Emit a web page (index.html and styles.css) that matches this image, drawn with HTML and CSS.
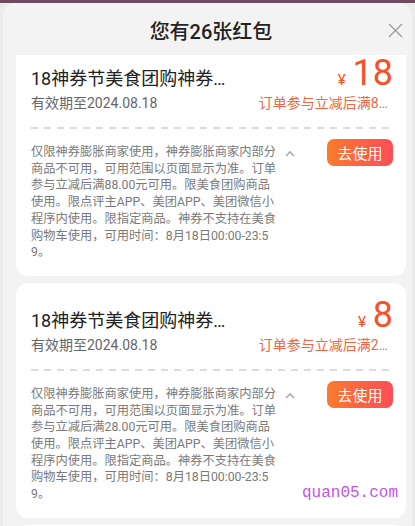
FILE: index.html
```html
<!DOCTYPE html>
<html lang="zh-CN">

<head>
    <meta charset="utf-8">
    <link rel="stylesheet" href="styles.css">
</head>

<body>

    <div class="sheet">
        <div class="sheet-head">
            <span></span>
            <h1 class="sheet-title">您有26张红包</h1>
            <button class="close" aria-label="关闭">
                <svg width="15" height="15" viewBox="0 0 15 15">
                    <path d="M1 1 L14 14 M14 1 L1 14" stroke="#9a9a9a" stroke-width="1.3" fill="none" />
                </svg>
            </button>
        </div>

        <div class="list">
            <div class="list-inner">

                <div class="coupon">
                    <div class="coupon-top">
                        <div class="coupon-name">18神券节美食团购神券…</div>
                        <div class="price"><span class="yen">¥</span>18</div>
                    </div>
                    <div class="coupon-sub">
                        <span class="expire">有效期至2024.08.18</span>
                        <span class="rule">订单参与立减后满8…</span>
                    </div>
                    <div class="dash"></div>
                    <div class="coupon-body">
                        <p class="desc">仅限神券膨胀商家使用，神券膨胀商家内部分商品不可用，可用范围以页面显示为准。订单参与立减后满88.00元可用。限美食团购商品使用。限点评主APP、美团APP、美团微信小程序内使用。限指定商品。神券不支持在美食购物车使用，可用时间：8月18日00:00-23:59。</p>
                        <svg class="fold" width="10" height="7" viewBox="0 0 10 7">
                            <polyline points="1,6 5,2 9,6" stroke="#aaa" stroke-width="1.6" fill="none" />
                        </svg>
                        <button class="use-btn">去使用</button>
                    </div>
                </div>

                <div class="coupon">
                    <div class="coupon-top">
                        <div class="coupon-name">18神券节美食团购神券…</div>
                        <div class="price"><span class="yen">¥</span>8</div>
                    </div>
                    <div class="coupon-sub">
                        <span class="expire">有效期至2024.08.18</span>
                        <span class="rule">订单参与立减后满2…</span>
                    </div>
                    <div class="dash"></div>
                    <div class="coupon-body">
                        <p class="desc">仅限神券膨胀商家使用，神券膨胀商家内部分商品不可用，可用范围以页面显示为准。订单参与立减后满28.00元可用。限美食团购商品使用。限点评主APP、美团APP、美团微信小程序内使用。限指定商品。神券不支持在美食购物车使用，可用时间：8月18日00:00-23:59。</p>
                        <svg class="fold" width="10" height="7" viewBox="0 0 10 7">
                            <polyline points="1,6 5,2 9,6" stroke="#aaa" stroke-width="1.6" fill="none" />
                        </svg>
                        <button class="use-btn">去使用</button>
                    </div>
                </div>

                <div class="coupon"></div>

            </div>
        </div>

        <div class="watermark">quan05.com</div>
    </div>

</body>

</html>
```

FILE: styles.css
```css
html,
body {
    margin: 0;
    width: 415px;
    height: 526px;
    overflow: hidden;
}

body {
    background: linear-gradient(#6e4c60 0, #6e4c60 3px, #ebebeb 3px);
    font-family: Roboto, "Noto Sans CJK SC", sans-serif;
    color: #222;
}

.sheet {
    position: relative;
    margin: 3px 3px 0;
    height: 523px;
    background: #f3f3f3;
    border-radius: 12px 12px 0 0;
    display: flex;
    flex-direction: column;
    overflow: hidden;
}

.sheet-head {
    height: 52px;
    flex-shrink: 0;
    display: grid;
    grid-template-columns: 1fr auto 1fr;
    align-items: center;
    padding: 0 9px 0 16px;
}

.sheet-title {
    margin: 5px 0 0;
    font-size: 20px;
    font-weight: 500;
    line-height: 28px;
}

.close {
    justify-self: end;
    padding: 0;
    border: none;
    background: none;
    display: flex;
    margin-top: 2px;
}

.list {
    flex: 1;
    overflow: hidden;
    padding: 0 6px 0 13px;
}

.list-inner {
    margin-top: -14px;
    display: flex;
    flex-direction: column;
    gap: 7px;
}

.coupon {
    background: #fff;
    border-radius: 12px;
    padding: 12px 13px 15px 15px;
    min-height: 60px;
}

.coupon-top {
    display: flex;
    justify-content: space-between;
    align-items: baseline;
    height: 40px;
}

.coupon-name {
    font-size: 18px;
    line-height: 24px;
}

.price {
    font-size: 36px;
    line-height: 40px;
    color: #f6512b;
}

.yen {
    font-size: 15px;
    margin-right: 7px;
}

.coupon-sub {
    display: flex;
    justify-content: space-between;
    font-size: 14px;
    line-height: 20px;
}

.expire {
    color: #666;
}

.rule {
    color: #ee6643;
    margin-right: 5px;
}

.dash {
    margin-top: 14px;
    height: 2px;
    background: repeating-linear-gradient(90deg, #dcdcdc 0, #dcdcdc 7px, transparent 7px, transparent 13px);
}

.coupon-body {
    display: flex;
    align-items: flex-start;
    padding-top: 10px;
}

.desc {
    margin: 5px 0 0;
    width: 248px;
    font-size: 12.25px;
    line-height: 16.7px;
    color: #7a7a7a;
    word-break: break-all;
}

.fold {
    margin: 11px 0 0 6px;
}

.use-btn {
    margin-left: auto;
    width: 66px;
    height: 27px;
    padding: 0;
    border: none;
    border-radius: 7px;
    background: linear-gradient(90deg, #fa7a2d, #fd4d58);
    color: #fff;
    font-family: inherit;
    font-size: 15px;
}

.watermark {
    position: absolute;
    right: 14px;
    top: 481px;
    font-family: "Liberation Mono", monospace;
    font-size: 16px;
    color: #c353ea;
}
```
